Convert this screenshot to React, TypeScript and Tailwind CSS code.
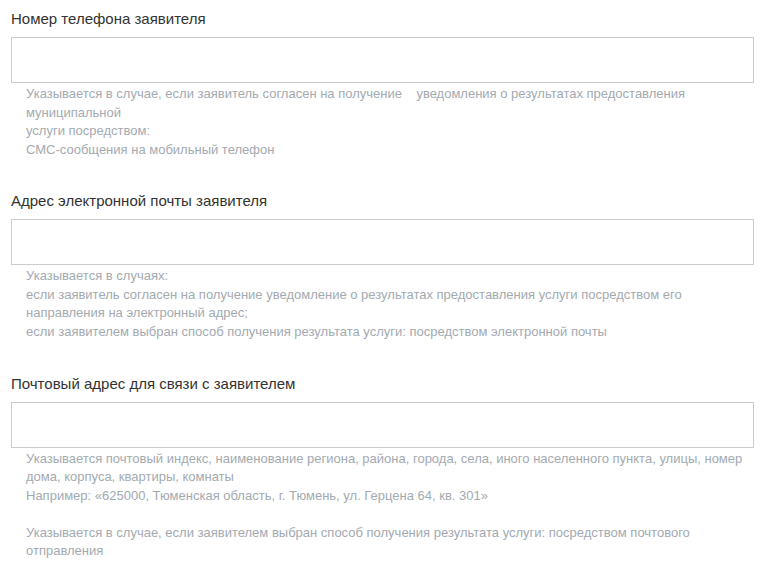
type Field = {
  label: string;
  hint: React.ReactNode;
};

const fields: Field[] = [
  {
    label: "Номер телефона заявителя",
    hint: (
      <>
        {"Указывается в случае, если заявитель согласен на получение\u00a0\u00a0\u00a0 уведомления о результатах предоставления муниципальной"}
        <br />
        услуги посредством:
        <br />
        СМС-сообщения на мобильный телефон
      </>
    ),
  },
  {
    label: "Адрес электронной почты заявителя",
    hint: (
      <>
        Указывается в случаях:
        <br />
        если заявитель согласен на получение уведомление о результатах предоставления услуги посредством его направления на электронный адрес;
        <br />
        если заявителем выбран способ получения результата услуги: посредством электронной почты
      </>
    ),
  },
  {
    label: "Почтовый адрес для связи с заявителем",
    hint: (
      <>
        Указывается почтовый индекс, наименование региона, района, города, села, иного населенного пункта, улицы, номер дома, корпуса, квартиры, комнаты
        <br />
        Например: «625000, Тюменская область, г. Тюмень, ул. Герцена 64, кв. 301»
        <br />
        <br />
        Указывается в случае, если заявителем выбран способ получения результата услуги: посредством почтового отправления
      </>
    ),
  },
];

function FormField({ label, hint }: Field) {
  return (
    <div className="flex flex-col">
      <label className="text-[15px] leading-[20px] text-[#333]">{label}</label>
      <input
        type="text"
        className="mt-[8px] h-[46px] w-full border border-[#ccc] bg-white px-3 outline-none"
      />
      <div className="mt-[2px] pl-[15px] text-[13px] leading-[1.428571] text-[#a3aab1]">
        {hint}
      </div>
    </div>
  );
}

export default function App() {
  return (
    <div
      className="min-h-screen bg-white pl-[11px] pr-[6px] pt-[9px]"
      style={{ fontFamily: '"Liberation Sans", Arial, sans-serif' }}
    >
      <div className="flex flex-col gap-[32px]">
        {fields.map((f) => (
          <FormField key={f.label} label={f.label} hint={f.hint} />
        ))}
      </div>
    </div>
  );
}
